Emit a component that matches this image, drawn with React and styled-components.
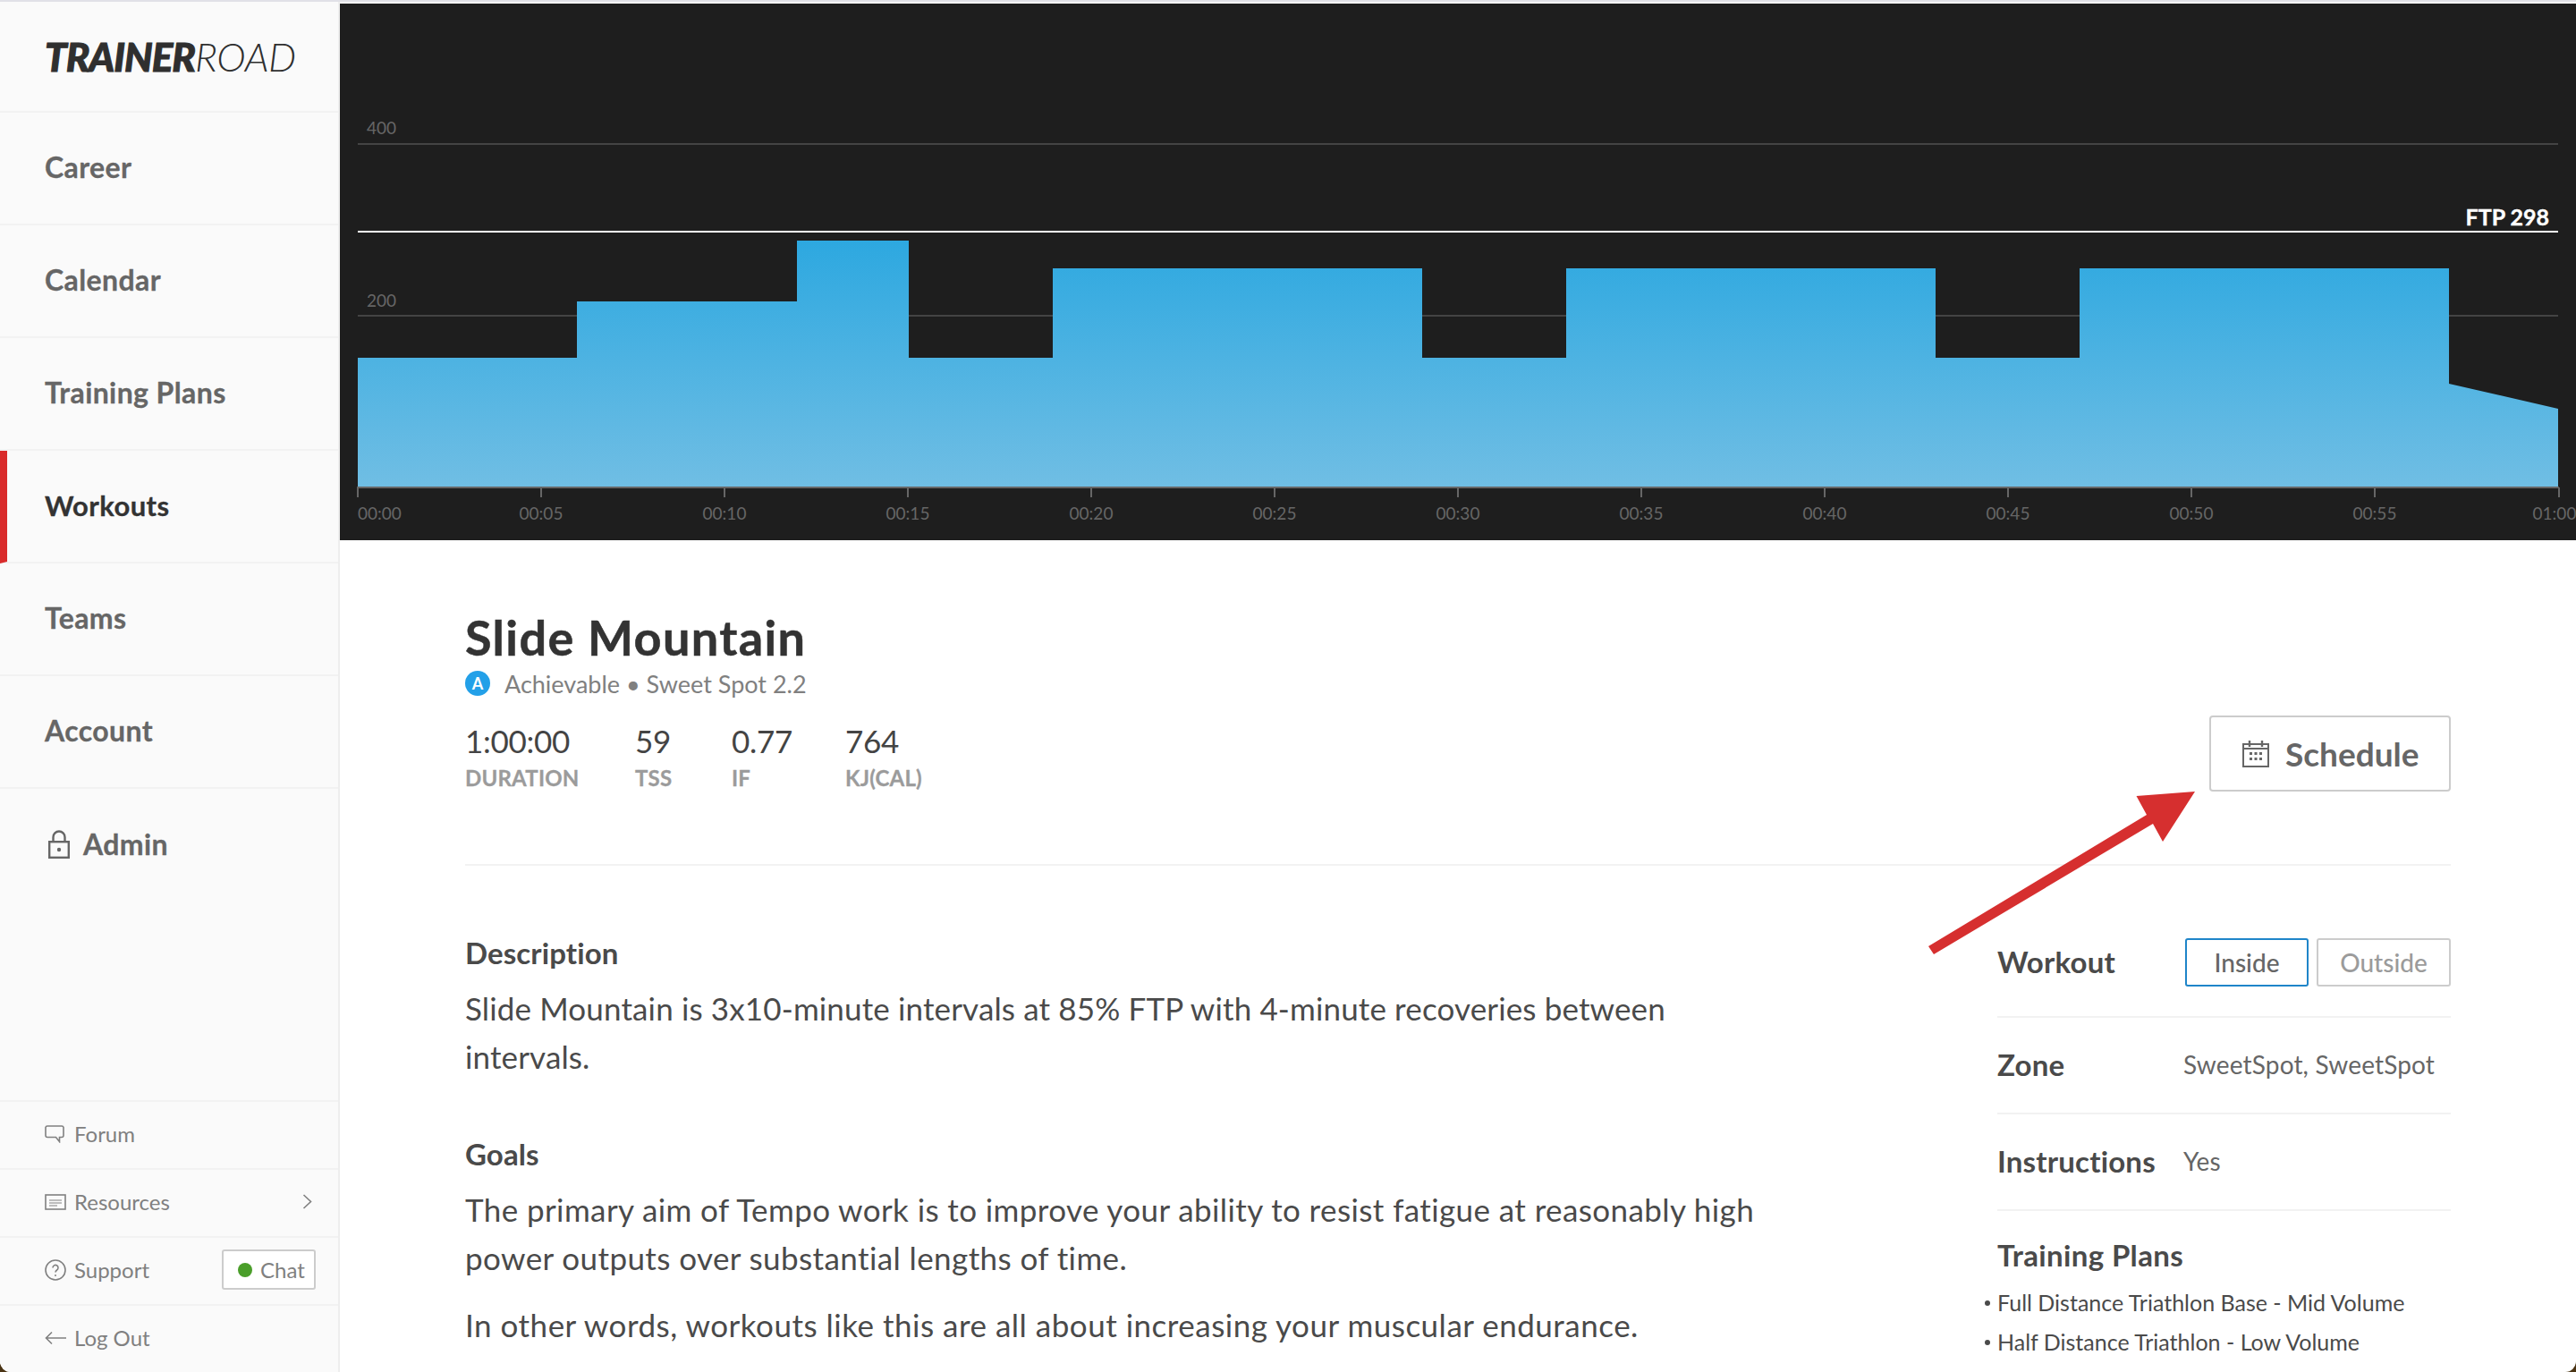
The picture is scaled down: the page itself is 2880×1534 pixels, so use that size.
import React from "react";
import styled, { createGlobalStyle } from "styled-components";

const Global = createGlobalStyle`
  html, body { margin: 0; padding: 0; background: #4a3414; }
  body { font-family: "Lato", "Liberation Sans", sans-serif; }
  * { box-sizing: border-box; }
`;

const Page = styled.div`
  position: relative;
  width: 2880px;
  height: 1534px;
  overflow: hidden;
  background: #fff;
  border-radius: 0 0 12px 12px;
  display: flex;
  flex-direction: column;
`;
const TopEdge = styled.div`
  height: 2px;
  flex: none;
  background: #e1e1e7;
`;
const Shell = styled.div`
  flex: 1;
  min-height: 0;
  display: grid;
  grid-template-columns: 380px 1fr;
`;
const Sidebar = styled.aside`
  display: flex;
  flex-direction: column;
  background: #fafafa;
  border-right: 2px solid #eeeeee;
`;
const LogoRow = styled.div`
  height: 124px;
  flex: none;
  display: flex;
  align-items: center;
  padding-left: 50px;
  border-bottom: 2px solid #f2f2f2;
`;
const Logo = styled.div`
  font-size: 44px;
  line-height: 1;
  font-style: italic;
  color: #2f2f2f;
  letter-spacing: -1px;
  font-weight: 900;
  -webkit-text-stroke: 1px #2f2f2f;
  span { font-weight: 300; letter-spacing: -0.4px; -webkit-text-stroke: 0; }
`;
const NavRow = styled.a`
  height: 126px;
  flex: none;
  display: flex;
  align-items: center;
  gap: 15px;
  padding-left: ${(p) => (p.$active ? 42 : 50)}px;
  padding-bottom: 3px;
  border-left: ${(p) => (p.$active ? "8px solid #d92b2b" : "0")};
  border-bottom: ${(p) => (p.$last ? "0" : "2px solid #f2f2f2")};
  font-size: ${(p) => (p.$active ? 31 : 32)}px;
  font-weight: 700;
  -webkit-text-stroke: 0.3px currentColor;
  color: ${(p) => (p.$active ? "#333333" : "#666666")};
  letter-spacing: 0.4px;
`;
const LockWrap = styled.span`
  display: flex;
  margin-left: 4px;
  -webkit-text-stroke: 0;
`;
const Spacer = styled.div`
  flex: 1;
`;
const FootRow = styled.div`
  height: 76px;
  flex: none;
  display: flex;
  align-items: center;
  padding: 0 25px 3px 50px;
  border-top: 2px solid #f2f2f2;
  font-size: 24px;
  color: #808080;
`;
const FootIcon = styled.span`
  width: 33px;
  flex: none;
  display: flex;
  align-items: center;
`;
const FootLabel = styled.span`
  flex: 1;
`;
const ChevronWrap = styled.span`
  display: flex;
  margin-right: 4px;
`;
const ChatButton = styled.button`
  width: 105px;
  height: 45px;
  display: flex;
  align-items: center;
  gap: 9px;
  padding: 0 0 0 16px;
  background: #fff;
  border: 2px solid #cccccc;
  border-radius: 3px;
  font: inherit;
  color: #808080;
`;
const Dot = styled.span`
  width: 16px;
  height: 16px;
  border-radius: 50%;
  background: #4a9e2a;
`;
const Main = styled.main`
  display: flex;
  flex-direction: column;
  min-width: 0;
  overflow: hidden;
`;
const ChartPanel = styled.div`
  height: 600px;
  flex: none;
  margin-top: 2px;
  background: #1e1e1e;
  svg { display: block; }
`;
const Content = styled.div`
  padding: 0 140px;
`;
const Header = styled.header`
  display: flex;
  justify-content: space-between;
  align-items: flex-end;
  padding: 79px 0 81px;
  border-bottom: 2px solid #f2f2f2;
`;
const Title = styled.h1`
  margin: 0;
  font-size: 54px;
  line-height: 60px;
  font-weight: 700;
  color: #333333;
  letter-spacing: 1.35px;
  -webkit-text-stroke: 0.5px #333333;
`;
const SubLine = styled.div`
  display: flex;
  align-items: center;
  gap: 16px;
  height: 36px;
  margin-top: 3px;
  font-size: 27px;
  color: #808080;
`;
const Badge = styled.span`
  width: 28px;
  height: 28px;
  border-radius: 50%;
  background: #23a0e8;
  color: #fff;
  font-size: 18px;
  font-weight: 700;
  display: flex;
  align-items: center;
  justify-content: center;
`;
const Stats = styled.div`
  display: grid;
  grid-template-columns: 190px 108px 127px auto;
  margin-top: 24px;
`;
const StatValue = styled.div`
  font-size: 35px;
  line-height: 44px;
  font-weight: 400;
  letter-spacing: -0.3px;
  color: #444444;
`;
const StatLabel = styled.div`
  font-size: 24px;
  line-height: 30px;
  margin-top: 5px;
  font-weight: 700;
  letter-spacing: 0.2px;
  -webkit-text-stroke: 0.3px #9b9b9b;
  color: #9b9b9b;
`;
const ScheduleButton = styled.button`
  width: 270px;
  height: 85px;
  display: flex;
  align-items: center;
  gap: 18px;
  padding: 0 0 0 35px;
  background: #fff;
  border: 2px solid #cccccc;
  border-radius: 4px;
  font: inherit;
  font-size: 37px;
  font-weight: 700;
  color: #666666;
`;
const Body = styled.div`
  display: grid;
  grid-template-columns: 1fr 507px;
  column-gap: 100px;
`;
const Article = styled.article`
  padding-top: 77px;
`;
const SectionTitle = styled.h2`
  margin: ${(p) => p.$top || 0}px 0 0;
  font-size: 33px;
  line-height: 40px;
  font-weight: 700;
  letter-spacing: 0.1px;
  color: #4a4a4a;
`;
const Para = styled.p`
  margin: ${(p) => p.$top || 16}px 0 0;
  font-size: 35px;
  line-height: 53.5px;
  letter-spacing: ${(p) => p.$ls || 0}px;
  color: #4a4a4a;
  max-width: 1450px;
`;
const Aside = styled.div`
  padding-top: 81px;
`;
const FactRow = styled.div`
  display: grid;
  grid-template-columns: 208px 1fr;
  align-items: center;
  height: ${(p) => p.$h}px;
  padding-bottom: ${(p) => p.$pb || 0}px;
  border-bottom: 2px solid #f2f2f2;
`;
const FactLabel = styled.div`
  font-size: 33px;
  font-weight: 700;
  letter-spacing: 0.2px;
  color: #4a4a4a;
  margin-top: -3px;
`;
const FactValue = styled.div`
  font-size: 28px;
  letter-spacing: 0.15px;
  color: #666666;
  white-space: nowrap;
  margin-top: -2px;
`;
const Toggle = styled.div`
  display: flex;
  justify-content: flex-end;
  gap: 9px;
`;
const ToggleButton = styled.button`
  width: ${(p) => p.$w}px;
  height: 54px;
  background: #fff;
  border: 2px solid ${(p) => (p.$on ? "#1f85c9" : "#cccccc")};
  border-radius: 3px;
  font: inherit;
  font-size: 28px;
  font-weight: 500;
  color: ${(p) => (p.$on ? "#666666" : "#9b9b9b")};
  padding: 0;
`;
const PlansTitle = styled.h3`
  margin: 29px 0 0;
  font-size: 33px;
  line-height: 40px;
  font-weight: 700;
  letter-spacing: 0.35px;
  color: #4a4a4a;
`;
const PlanList = styled.ul`
  margin: 11px 0 0;
  padding: 0;
  list-style: none;
`;
const PlanItem = styled.li`
  position: relative;
  font-size: 25px;
  line-height: 44px;
  color: #4a4a4a;
  white-space: nowrap;
  &::before {
    content: "";
    position: absolute;
    left: -14px;
    top: 20px;
    width: 6px;
    height: 6px;
    border-radius: 50%;
    background: #4a4a4a;
  }
`;
const ArrowOverlay = styled.svg`
  position: absolute;
  left: 2150px;
  top: 880px;
`;

const ticks = ["00:00","00:05","00:10","00:15","00:20","00:25","00:30","00:35","00:40","00:45","00:50","00:55","01:00"];
const X = (m) => 400 + m * 41;
const shape = [
  [400, 400],[645, 400],[645, 337],[891, 337],[891, 269],[1016, 269],[1016, 400],[1177, 400],[1177, 300],[1590, 300],[1590, 400],[1751, 400],[1751, 300],[2164, 300],[2164, 400],[2325, 400],[2325, 300],[2738, 300],[2738, 429],[2860, 457],[2860, 544],[400, 544],
].map(([x, y]) => `${x},${y}`).join(" ");

const axisText = { fontFamily: "Lato, sans-serif", fontSize: 19, fill: "#666666" };

function Chart() {
  return (
    <svg width="2500" height="600" viewBox="380 4 2500 600">
      <defs>
        <linearGradient id="fill" gradientUnits="userSpaceOnUse" x1="0" y1="269" x2="0" y2="545">
          <stop offset="0" stopColor="#2da8e0" />
          <stop offset="1" stopColor="#70bee4" />
        </linearGradient>
      </defs>
      <text x="410" y="150" {...axisText}>400</text>
      <text x="410" y="343" {...axisText}>200</text>
      <rect x="400" y="160" width="2460" height="2" fill="#444444" />
      <rect x="400" y="352" width="2460" height="2" fill="#444444" />
      <rect x="400" y="258" width="2460" height="2" fill="#ffffff" />
      <text x="2850" y="252" textAnchor="end" fontFamily="Lato, sans-serif" fontWeight="700" fontSize="25" fill="#ffffff" stroke="#ffffff" strokeWidth="0.4">FTP 298</text>
      <polygon points={shape} fill="url(#fill)" />
      <rect x="399" y="544" width="2462" height="2" fill="#666666" />
      {ticks.map((t, i) => (
        <g key={t}>
          <rect x={X(i * 5) - 1 + (i === 12 ? 1 : 0)} y="545" width="2" height="11" fill="#666666" />
          <text
            x={i === 0 ? 400 : i === 12 ? 2856 : X(i * 5)}
            y="581"
            textAnchor={i === 0 ? "start" : "middle"}
            {...axisText}
          >
            {t}
          </text>
        </g>
      ))}
    </svg>
  );
}

const stroke = { fill: "none", stroke: "currentColor" };

const LockIcon = () => (
  <svg width="24" height="32" viewBox="0 0 24 32" {...stroke} strokeWidth="2.4" color="#666666">
    <rect x="1.2" y="13.2" width="21.6" height="17.6" />
    <path d="M5.5 13V8a6.5 6.5 0 0 1 13 0v5" />
    <circle cx="12" cy="22" r="2.2" fill="#666666" stroke="none" />
  </svg>
);
const ForumIcon = () => (
  <svg width="22" height="20" viewBox="0 0 22 20" {...stroke} strokeWidth="1.6" color="#808080">
    <path d="M3 1h16a2 2 0 0 1 2 1.5v9a2 2 0 0 1-2 2h-2.5v5l-4-5H3a2 2 0 0 1-2-2v-9A2 2 0 0 1 3 1z" />
  </svg>
);
const ResourcesIcon = () => (
  <svg width="24" height="20" viewBox="0 0 24 20" {...stroke} strokeWidth="1.6" color="#808080">
    <rect x="1" y="2" width="22" height="16" />
    <path d="M5 8h14M5 11h14M5 14h9" strokeWidth="1" />
  </svg>
);
const SupportIcon = () => (
  <svg width="24" height="24" viewBox="0 0 24 24" {...stroke} strokeWidth="1.6" color="#808080">
    <circle cx="12" cy="12" r="11" />
    <path d="M9 9.5a3 3 0 1 1 4.6 2.5c-1 .7-1.6 1.2-1.6 2.5" />
    <circle cx="12" cy="18" r="1" fill="#808080" stroke="none" />
  </svg>
);
const BackIcon = () => (
  <svg width="24" height="16" viewBox="0 0 24 16" {...stroke} strokeWidth="1.6" color="#808080">
    <path d="M24 8H1.5M8 1.5 1.5 8 8 14.5" />
  </svg>
);
const Chevron = () => (
  <svg width="11" height="17" viewBox="0 0 11 17" {...stroke} strokeWidth="1.6" color="#808080">
    <path d="M1.5 1 9.5 8.5 1.5 16" />
  </svg>
);
const CalendarIcon = () => (
  <svg width="30" height="30" viewBox="0 0 30 30" color="#666666">
    <rect x="1" y="4" width="28" height="25" fill="none" stroke="currentColor" strokeWidth="2" />
    <path d="M1 9h28" stroke="currentColor" strokeWidth="2" />
    <path d="M8 0v7M22 0v7" stroke="currentColor" strokeWidth="2.4" />
    {[8, 13.5, 19].map((x) =>
      [13, 19].map((y) => <rect key={`${x}-${y}`} x={x} y={y} width="3" height="3" fill="currentColor" />)
    )}
  </svg>
);

function App() {
  return (
    <>
      <Global />
      <Page>
        <TopEdge />
        <Shell>
          <Sidebar>
            <LogoRow>
              <Logo>TRAINER<span>ROAD</span></Logo>
            </LogoRow>
            <NavRow>Career</NavRow>
            <NavRow>Calendar</NavRow>
            <NavRow>Training Plans</NavRow>
            <NavRow $active>Workouts</NavRow>
            <NavRow>Teams</NavRow>
            <NavRow>Account</NavRow>
            <NavRow $last>
              <LockWrap><LockIcon /></LockWrap>
              Admin
            </NavRow>
            <Spacer />
            <FootRow><FootIcon><ForumIcon /></FootIcon><FootLabel>Forum</FootLabel></FootRow>
            <FootRow><FootIcon><ResourcesIcon /></FootIcon><FootLabel>Resources</FootLabel><ChevronWrap><Chevron /></ChevronWrap></FootRow>
            <FootRow>
              <FootIcon><SupportIcon /></FootIcon>
              <FootLabel>Support</FootLabel>
              <ChatButton><Dot />Chat</ChatButton>
            </FootRow>
            <FootRow><FootIcon><BackIcon /></FootIcon><FootLabel>Log Out</FootLabel></FootRow>
          </Sidebar>
          <Main>
            <ChartPanel><Chart /></ChartPanel>
            <Content>
              <Header>
                <div>
                  <Title>Slide Mountain</Title>
                  <SubLine><Badge>A</Badge>Achievable • Sweet Spot 2.2</SubLine>
                  <Stats>
                    <div><StatValue>1:00:00</StatValue><StatLabel>DURATION</StatLabel></div>
                    <div><StatValue>59</StatValue><StatLabel>TSS</StatLabel></div>
                    <div><StatValue>0.77</StatValue><StatLabel>IF</StatLabel></div>
                    <div><StatValue>764</StatValue><StatLabel>KJ(CAL)</StatLabel></div>
                  </Stats>
                </div>
                <ScheduleButton><CalendarIcon />Schedule</ScheduleButton>
              </Header>
              <Body>
                <Article>
                  <SectionTitle>Description</SectionTitle>
                  <Para $ls={0.14}>Slide Mountain is 3x10-minute intervals at 85% FTP with 4-minute recoveries between intervals.</Para>
                  <SectionTitle $top={62}>Goals</SectionTitle>
                  <Para $ls={0.4}>The primary aim of Tempo work is to improve your ability to resist fatigue at reasonably high power outputs over substantial lengths of time.</Para>
                  <Para $top={22} $ls={0.5}>In other words, workouts like this are all about increasing your muscular endurance.</Para>
                </Article>
                <Aside>
                  <FactRow $h={89} $pb={33}>
                    <FactLabel>Workout</FactLabel>
                    <Toggle>
                      <ToggleButton $on $w={138}>Inside</ToggleButton>
                      <ToggleButton $w={150}>Outside</ToggleButton>
                    </Toggle>
                  </FactRow>
                  <FactRow $h={108}>
                    <FactLabel>Zone</FactLabel>
                    <FactValue>SweetSpot, SweetSpot</FactValue>
                  </FactRow>
                  <FactRow $h={108}>
                    <FactLabel>Instructions</FactLabel>
                    <FactValue>Yes</FactValue>
                  </FactRow>
                  <PlansTitle>Training Plans</PlansTitle>
                  <PlanList>
                    <PlanItem>Full Distance Triathlon Base - Mid Volume</PlanItem>
                    <PlanItem>Half Distance Triathlon - Low Volume</PlanItem>
                  </PlanList>
                </Aside>
              </Body>
            </Content>
          </Main>
        </Shell>
        <ArrowOverlay width="320" height="200" viewBox="2150 880 320 200">
          <polygon
            fill="#d62f2f"
            points="2454,885 2388.5,890 2400,911 2156,1058 2162,1067 2407,921 2418,941"
          />
        </ArrowOverlay>
      </Page>
    </>
  );
}

export default App;
